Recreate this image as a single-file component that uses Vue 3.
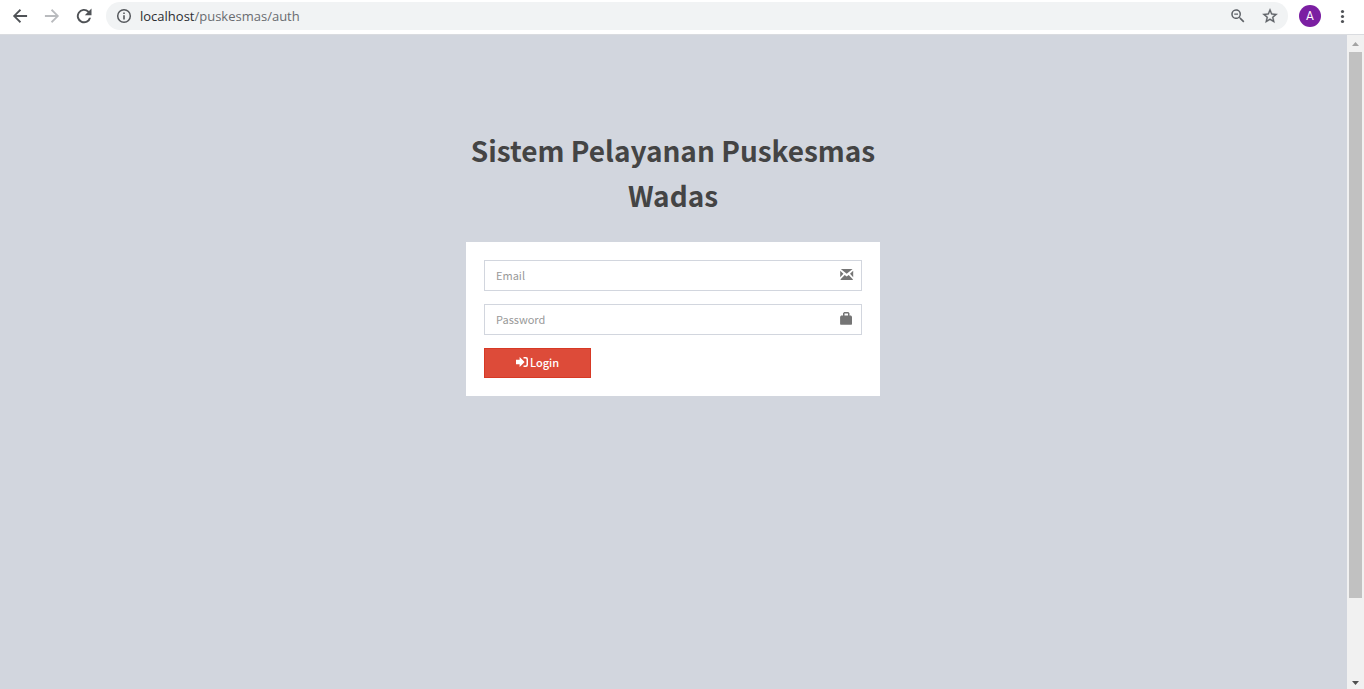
<script setup>
import { ref } from 'vue'

const address = 'localhost'
const path = '/puskesmas/auth'
const email = ref('')
const password = ref('')
</script>

<template>
  <div class="browser">
    <header class="toolbar">
      <nav class="nav" aria-label="Browser navigation">
        <button type="button" class="tool" aria-label="Back">
          <svg width="20" height="20" viewBox="0 0 24 24"><path fill="#4f5256" d="M20.500 10.900H7.700l5.600-5.600L11.800 3.700 3.500 12l8.300 8.300 1.500-1.600-5.600-5.600h12.800z" /></svg>
        </button>
        <button type="button" class="tool" aria-label="Forward">
          <svg width="20" height="20" viewBox="0 0 24 24"><path fill="#b9bbbe" d="M3.500 10.900h12.800l-5.600-5.600 1.500-1.600 8.300 8.300-8.300 8.300-1.500-1.600 5.600-5.600H3.500z" /></svg>
        </button>
        <button type="button" class="tool" aria-label="Reload">
          <svg width="20" height="20" viewBox="0 0 24 24"><path fill="#4f5256" d="M18 6A8.600 8.600 0 1 0 20.400 14h-2.400A6.300 6.300 0 1 1 16.400 7.600L13 11h8V3z" /></svg>
        </button>
      </nav>
      <div class="omnibox">
        <svg class="info" width="16" height="16" viewBox="0 0 16 16">
          <circle cx="8" cy="8" r="6.300" fill="none" stroke="#55585c" stroke-width="1.500" />
          <path fill="#55585c" d="M7.200 7.200h1.600v4.300H7.200zM7.200 4.500h1.600v1.600H7.200z" />
        </svg>
        <span class="url">{{ address }}<span class="path">{{ path }}</span></span>
        <button type="button" class="tool" aria-label="Zoom">
          <svg width="18" height="18" viewBox="0 0 24 24"><path fill="#5f6368" d="M15.500 14h-.8l-.3-.3A6.500 6.500 0 1 0 13.700 14.400l.3.3v.8l5 5 1.500-1.500zm-6 0a4.500 4.500 0 1 1 0-9 4.500 4.500 0 0 1 0 9zM7 8.700h5v1.500H7z" /></svg>
        </button>
        <button type="button" class="tool" aria-label="Bookmark">
          <svg width="18" height="18" viewBox="0 0 24 24"><path fill="#5f6368" stroke="#5f6368" stroke-width=".4" d="M22 9.240l-7.190-.62L12 2 9.190 8.630 2 9.240l5.460 4.730L5.820 21 12 17.270 18.180 21l-1.630-7.030zM12 15.400l-3.760 2.270 1-4.280-3.320-2.880 4.380-.38L12 6.100l1.710 4.040 4.380.38-3.320 2.880 1 4.280z" /></svg>
        </button>
      </div>
      <button type="button" class="avatar" aria-label="Profile">A</button>
      <button type="button" class="tool menu" aria-label="Menu">
        <svg width="16" height="16" viewBox="0 0 16 16" fill="#4f5256">
          <circle cx="8.500" cy="3.500" r="1.600" /><circle cx="8.500" cy="8.500" r="1.600" /><circle cx="8.500" cy="13.500" r="1.600" />
        </svg>
      </button>
    </header>

    <div class="viewport">
      <main class="page">
        <div class="login">
          <h1>Sistem Pelayanan Puskesmas Wadas</h1>
          <form class="card" @submit.prevent>
            <div class="field">
              <input v-model="email" type="email" placeholder="Email" aria-label="Email" />
              <svg class="glyph" width="14" height="14" viewBox="0 0 14 14" fill="#757575">
                <path d="M.8 2h11.800L6.700 6.800zM.2 3.800 3.400 6.700.2 10.200zM13.200 3.800v6.400L10 6.700zM4.700 8 6.700 9.600 8.700 8 12.800 12.200v.8H.6v-.8z" />
              </svg>
            </div>
            <div class="field">
              <input v-model="password" type="password" placeholder="Password" aria-label="Password" />
              <svg class="glyph" width="14" height="14" viewBox="0 0 14 14" fill="#757575">
                <path fill-rule="evenodd" d="M3 4.500V2.200L4.200 1h4.100L9.500 2.200v2.300H11L12 5.800v7.400l-.6.600H.7l-.6-.6V5.800l1-1.300zM4.500 4.500H8V2.600H4.500z" />
              </svg>
            </div>
            <button type="submit" class="submit">
              <svg width="12" height="12" viewBox="0 0 12 12" fill="#fff">
                <path d="M0 3.800h3.600V1L8.600 6l-5 5V8.200H0zM7.500 1h2.200A2.200 2.200 0 0 1 12 3.200v5.600A2.200 2.200 0 0 1 9.700 11H7.500V9.500h2.100a.9.900 0 0 0 .9-.9V3.400a.9.900 0 0 0-.9-.9H7.500z" />
              </svg>
              <span>Login</span>
            </button>
          </form>
        </div>
      </main>
      <div class="scrollbar" aria-hidden="true">
        <svg width="17" height="17" viewBox="0 0 17 17"><path fill="#a3a3a3" d="M5 11h7L8.500 7z" /></svg>
        <div class="track"><div class="thumb"></div><div class="rest"></div></div>
        <svg width="17" height="13" viewBox="0 0 17 13"><path fill="#505050" d="M5 5h7L8.500 9z" /></svg>
      </div>
    </div>
  </div>
</template>

<style>
body {
  margin: 0;
}
</style>

<style scoped>
* {
  box-sizing: border-box;
}

.browser {
  display: flex;
  flex-direction: column;
  min-height: 100vh;
  font-family: "Noto Sans CJK JP", "Noto Sans", sans-serif;
}

button {
  border: 0;
  padding: 0;
  background: none;
  font-family: inherit;
}

.toolbar {
  display: flex;
  align-items: center;
  height: 35px;
  padding: 0 14px 3px 10px;
  background: #fff;
  border-bottom: 1px solid #dadce0;
}

.nav {
  display: flex;
  gap: 12px;
  margin-right: 12px;
}

.tool {
  display: flex;
}

.omnibox {
  flex: 1;
  display: flex;
  align-items: center;
  gap: 14px;
  height: 28px;
  margin-right: 11px;
  padding: 0 9px 0 10px;
  border-radius: 14px;
  background: #f1f3f4;
}

.info {
  margin-right: -6px;
}

.url {
  flex: 1;
  font: 13px/20px "Open Sans", sans-serif;
  color: #2c2e31;
}

.path {
  color: #696c70;
}

.avatar {
  width: 22px;
  height: 22px;
  border-radius: 50%;
  background: #7b1fa2;
  color: #fff;
  font: 12px/22px Roboto, sans-serif;
  text-align: center;
}

.menu {
  margin-left: 13px;
}

.viewport {
  flex: 1;
  display: flex;
  background: #d2d6de;
}

.page {
  flex: 1;
  padding: 93px 1px 0 0;
}

.login {
  max-width: 414px;
  margin: 0 auto;
}

h1 {
  margin: 0 0 24px;
  font-size: 28px;
  font-weight: 700;
  line-height: 45px;
  text-align: center;
  color: #444;
}

.card {
  display: flex;
  flex-direction: column;
  gap: 13px;
  padding: 18px;
  background: #fff;
}

.field {
  position: relative;
  display: flex;
}

input {
  width: 100%;
  height: 31px;
  padding: 0 38px 2px 11px;
  border: 1px solid #d2d6de;
  border-radius: 0;
  background: #fff;
  color: #555;
  font-family: inherit;
  font-size: 11px;
}

input::placeholder {
  color: #999;
  opacity: 1;
}

.glyph {
  position: absolute;
  top: 7px;
  right: 8px;
}

.submit {
  display: flex;
  align-items: center;
  justify-content: center;
  gap: 2px;
  width: 107px;
  height: 30px;
  padding-bottom: 2px;
  border: 1px solid #d73925;
  background: #dd4b39;
  color: #fff;
  font-size: 11px;
  font-weight: 500;
}

.scrollbar {
  display: flex;
  flex-direction: column;
  width: 17px;
  background: #f1f1f1;
}

.track {
  flex: 1;
  display: flex;
  flex-direction: column;
  padding: 0 2px;
}

.thumb {
  flex: 7;
  background: #c1c1c1;
}

.rest {
  flex: 1;
}
</style>
